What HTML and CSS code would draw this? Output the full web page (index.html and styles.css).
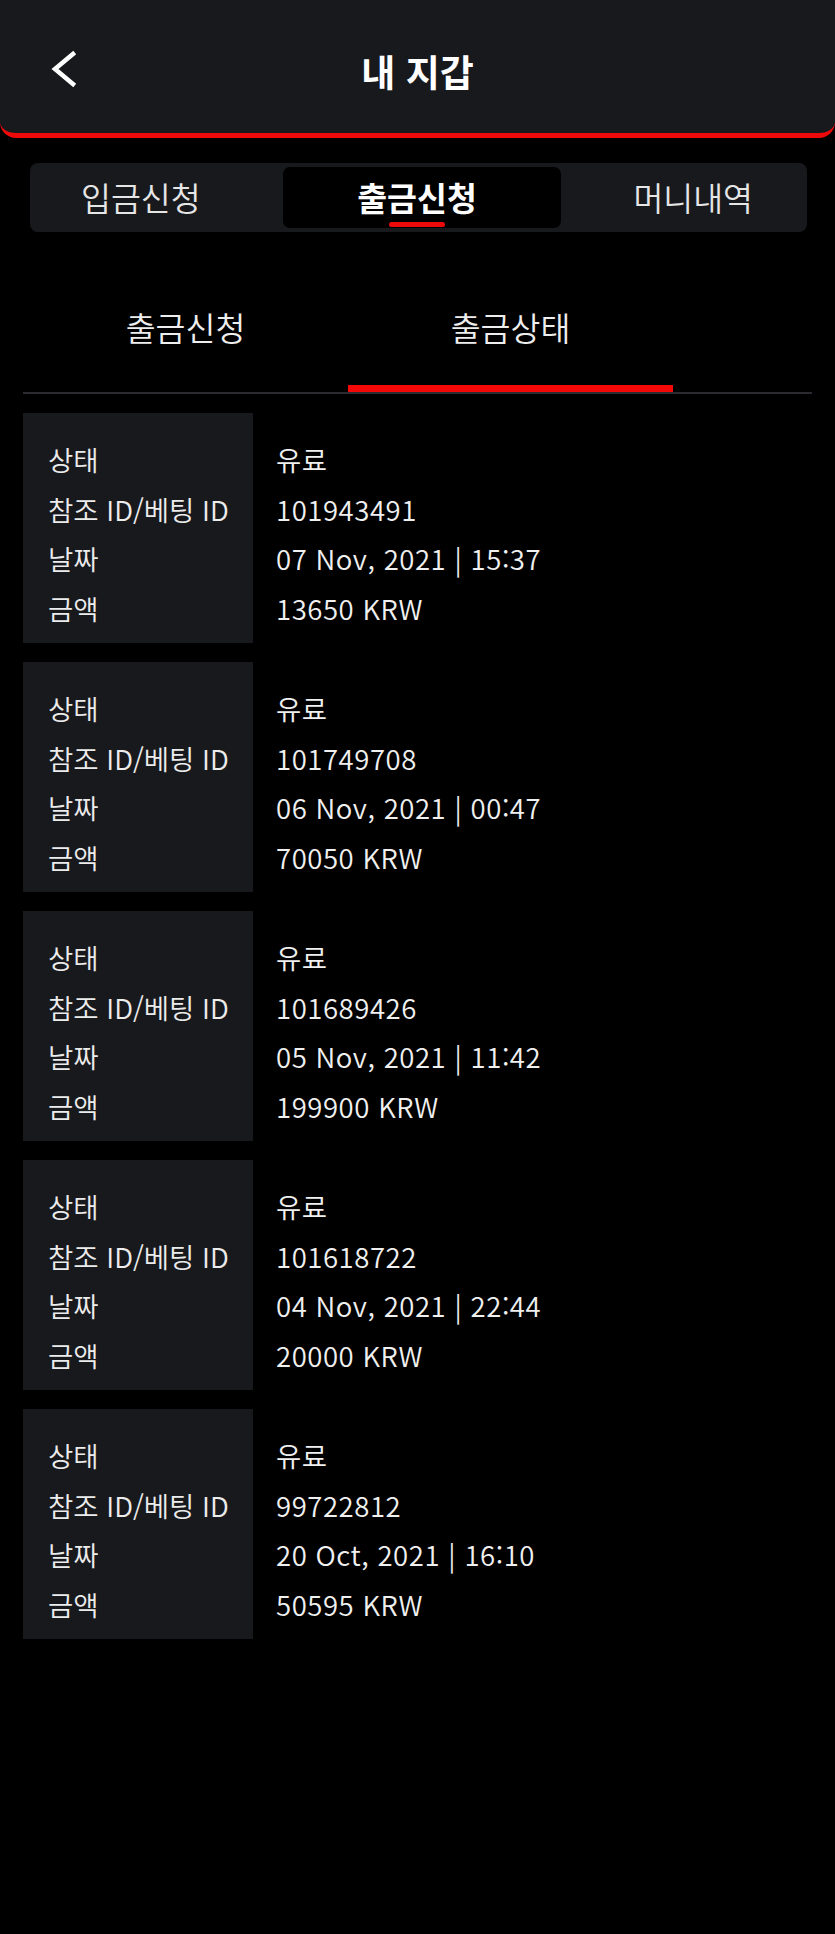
FILE: index.html
```html
<!DOCTYPE html>
<html lang="ko">
<head>
<meta charset="utf-8">
<title>내 지갑</title>
<link rel="stylesheet" href="styles.css">
</head>
<body>
<header class="header">
  <div class="back">
    <svg width="28" height="40" viewBox="0 0 28 40"><polyline points="22,5 4,20 22,35" fill="none" stroke="#ffffff" stroke-width="4.5" stroke-linecap="square" stroke-linejoin="miter"/></svg>
  </div>
  <h1 class="title">내 지갑</h1>
  <div></div>
</header>

<nav class="tabbar">
  <div class="tab tab-left">입금신청</div>
  <div class="tab tab-active">출금신청<span class="tab-mark"></span></div>
  <div class="tab tab-right">머니내역</div>
</nav>

<div class="subtabs">
  <div class="subtab">출금신청</div>
  <div class="subtab subtab-active">출금상태</div>
</div>

<main class="list">
  <section class="card">
    <div class="labels"><div>상태</div><div>참조 ID/베팅 ID</div><div>날짜</div><div>금액</div></div>
    <div class="values"><div>유료</div><div>101943491</div><div>07 Nov, 2021 | 15:37</div><div>13650 KRW</div></div>
  </section>
  <section class="card">
    <div class="labels"><div>상태</div><div>참조 ID/베팅 ID</div><div>날짜</div><div>금액</div></div>
    <div class="values"><div>유료</div><div>101749708</div><div>06 Nov, 2021 | 00:47</div><div>70050 KRW</div></div>
  </section>
  <section class="card">
    <div class="labels"><div>상태</div><div>참조 ID/베팅 ID</div><div>날짜</div><div>금액</div></div>
    <div class="values"><div>유료</div><div>101689426</div><div>05 Nov, 2021 | 11:42</div><div>199900 KRW</div></div>
  </section>
  <section class="card">
    <div class="labels"><div>상태</div><div>참조 ID/베팅 ID</div><div>날짜</div><div>금액</div></div>
    <div class="values"><div>유료</div><div>101618722</div><div>04 Nov, 2021 | 22:44</div><div>20000 KRW</div></div>
  </section>
  <section class="card">
    <div class="labels"><div>상태</div><div>참조 ID/베팅 ID</div><div>날짜</div><div>금액</div></div>
    <div class="values"><div>유료</div><div>99722812</div><div>20 Oct, 2021 | 16:10</div><div>50595 KRW</div></div>
  </section>
</main>
</body>
</html>
```

FILE: styles.css
```css
html, body {
  margin: 0;
  padding: 0;
  background: #000000;
}
body {
  font-family: "Noto Sans CJK KR", "Noto Sans", sans-serif;
  color: #eeeeee;
  min-height: 1934px;
}
.header {
  box-sizing: border-box;
  height: 138px;
  background: #18191d;
  border-bottom: 5px solid #ee0a0a;
  border-radius: 0 0 16px 16px;
  display: grid;
  grid-template-columns: 1fr auto 1fr;
  align-items: center;
  padding-top: 8px;
}
.back {
  padding-left: 51px;
  display: flex;
  align-items: center;
  margin-top: -4px;
}
.back svg { display: block; }
.title {
  margin: 0;
  font-size: 37px;
  font-weight: 700;
  color: #ffffff;
  line-height: 44px;
}
.tabbar {
  margin: 25px 28px 0 30px;
  padding: 4px;
  height: 69px;
  box-sizing: border-box;
  background: #18191d;
  border-radius: 8px;
  display: grid;
  grid-template-columns: 249px 278px 1fr;
}
.tab {
  font-size: 32.5px;
  line-height: 60px;
  color: #e6e6e6;
  position: relative;
  font-weight: 350;
}
.tab-left { padding-left: 47px; }
.tab-right { text-align: right; padding-right: 50px; }
.tab-active {
  background: #000000;
  border-radius: 7px;
  text-align: center;
  padding-right: 10px;
  font-weight: 700;
  color: #ffffff;
}
.tab-mark {
  position: absolute;
  left: 106px;
  bottom: 1px;
  width: 56px;
  height: 5px;
  border-radius: 3px;
  background: #ee0a0a;
}
.subtabs {
  margin: 73px 23px 0 23px;
  border-bottom: 2px solid #2a2b31;
  display: flex;
}
.subtab {
  width: 325px;
  text-align: center;
  font-size: 32.5px;
  font-weight: 350;
  line-height: 44px;
  padding-bottom: 36px;
  border-bottom: 7px solid transparent;
  color: #eeeeee;
}
.subtab-active {
  border-bottom-color: #f40808;
}
.list {
  margin: 19px 23px 0 23px;
  display: flex;
  flex-direction: column;
  gap: 19px;
}
.card {
  display: flex;
  height: 230px;
}
.labels, .values {
  font-size: 27.5px;
  font-weight: 350;
  line-height: 49.5px;
  padding-top: 22px;
  box-sizing: border-box;
}
.labels {
  width: 230px;
  background: #18191d;
  padding-left: 25px;
  color: #ececec;
}
.values {
  padding-left: 23px;
  color: #f0f0f0;
  letter-spacing: 0.55px;
}
```
